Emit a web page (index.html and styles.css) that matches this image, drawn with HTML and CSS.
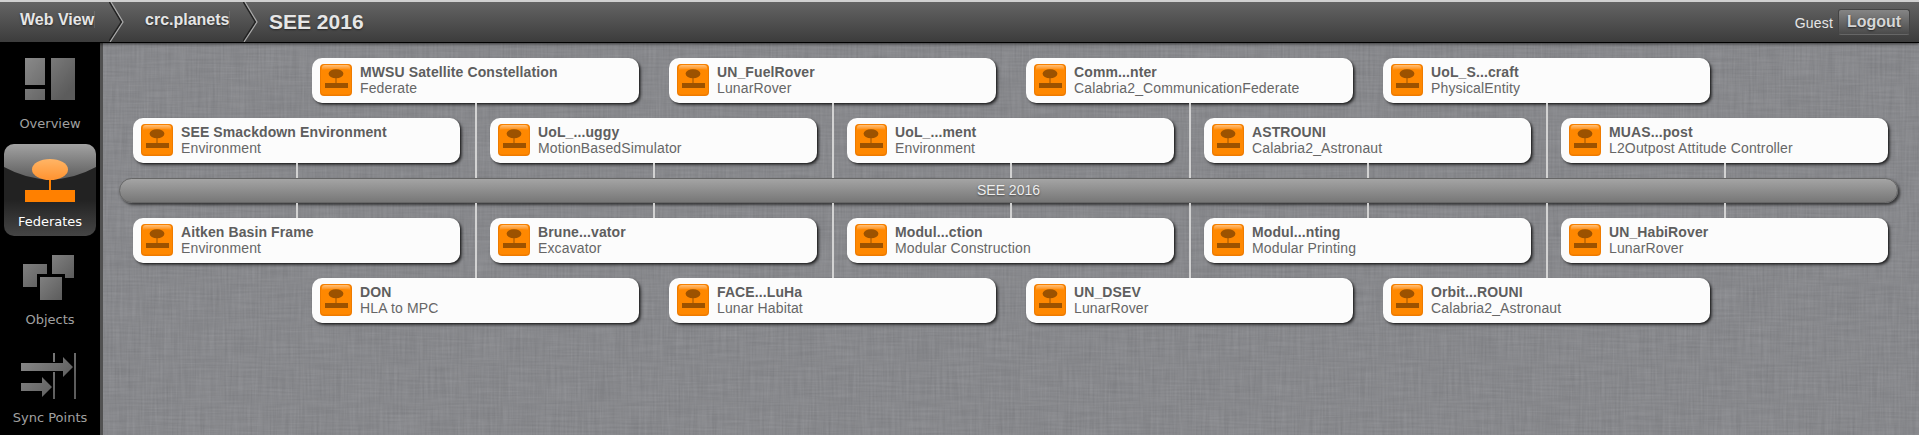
FILE: index.html
```html
<!DOCTYPE html>
<html lang="en">
<head>
<meta charset="utf-8">
<title>SEE 2016</title>
<link rel="stylesheet" href="styles.css">
</head>
<body>
<svg class="defs" width="0" height="0" aria-hidden="true">
  <defs>
    <linearGradient id="steel" x1="0" y1="0" x2="1" y2="1"><stop offset="0" stop-color="#808080"/><stop offset="1" stop-color="#5c5c5c"/></linearGradient>
    <linearGradient id="steelAll" gradientUnits="userSpaceOnUse" x1="15" y1="0" x2="65" y2="45"><stop offset="0" stop-color="#949494"/><stop offset="1" stop-color="#5c5c5c"/></linearGradient>
    <linearGradient id="amber" x1="0" y1="0" x2="0" y2="1"><stop offset="0" stop-color="#ffb566"/><stop offset="1" stop-color="#ff9330"/></linearGradient>
    <linearGradient id="gloss" x1="0" y1="0" x2="0" y2="1"><stop offset="0" stop-color="#a2a2a2"/><stop offset="1" stop-color="#5c5c5c"/></linearGradient>
    <linearGradient id="shine" x1="0" y1="0" x2="0" y2="1"><stop offset="0" stop-color="#ffc07a"/><stop offset="1" stop-color="#ff8a0a"/></linearGradient>
    <symbol id="federate" viewBox="0 0 32 32">
      <rect width="32" height="32" rx="4" fill="#ee7b00"/>
      <rect x="1" y="0.5" width="30" height="30" rx="3.5" fill="#ff8800"/>
      <path d="M2 6V3.5Q2 1 5 1H27Q30 1 30 3.5V6Q16 4 2 6Z" fill="url(#shine)"/>
      <ellipse cx="16" cy="9.8" rx="7.4" ry="4.5" fill="#9c5200"/>
      <path d="M15.5 14h1v5h-1zM5 19h23v5H5z" fill="#9c5200"/>
    </symbol>
  </defs>
</svg>

<header class="topbar">
  <nav class="crumbs">
    <a class="crumb first"><span>Web View</span></a>
    <svg class="chevron" width="16" height="40" viewBox="0 0 16 40"><path d="M2 0L14 20L1 40" fill="none" stroke="#222" stroke-width="1.5" transform="translate(-1.6 0)"/><path d="M2 0L14 20L1 40" fill="none" stroke="#aaa" stroke-width="1.2"/></svg>
    <a class="crumb second"><span>crc.planets</span></a>
    <svg class="chevron" width="16" height="40" viewBox="0 0 16 40"><path d="M2 0L14 20L1 40" fill="none" stroke="#222" stroke-width="1.5" transform="translate(-1.6 0)"/><path d="M2 0L14 20L1 40" fill="none" stroke="#aaa" stroke-width="1.2"/></svg>
    <h1 class="title">SEE 2016</h1>
  </nav>
  <div class="account"><span>Guest</span><button class="logout">Logout</button></div>
</header>

<div class="shell">
  <aside class="side">
    <a class="tab">
      <svg width="92" height="60" viewBox="0 0 92 60"><path d="M21 12h20v27H21zM21 43h20v11H21zM47 12h24v42H47z" fill="url(#steelAll)"/></svg>
      <span>Overview</span>
    </a>
    <a class="tab active">
      <svg width="92" height="60" viewBox="0 0 92 60"><path d="M0 0H92V23Q46 48 0 23Z" fill="url(#gloss)"/><path d="M45 34h2v14h-2z" fill="#ff8000"/><ellipse cx="46" cy="25.5" rx="18" ry="10.5" fill="url(#amber)"/><path d="M21 46h50v12H21z" fill="#ff8000"/></svg>
      <span>Federates</span>
    </a>
    <a class="tab">
      <svg width="92" height="60" viewBox="0 0 92 60"><path d="M48 13h22v23H48z" fill="url(#steel)"/><path d="M19 22h24v23H19z" fill="url(#steel)"/><path d="M33 32h28v28H33z" fill="#000"/><path d="M36 35h22v23H36z" fill="url(#steel)"/></svg>
      <span>Objects</span>
    </a>
    <a class="tab">
      <svg width="92" height="60" viewBox="0 0 92 60"><path d="M49 13h2v9h-2zM49 32h2v27h-2zM70 13h2v46h-2zM17 23h42v-6l10 10-10 10v-6H17zM17 43h21v-6l10 10-10 10v-6H17z" fill="url(#steelAll)"/></svg>
      <span>Sync Points</span>
    </a>
  </aside>

  <main class="canvas">
    <svg class="linen" width="100%" height="100%" aria-hidden="true">
      <filter id="weft" x="0" y="0" width="100%" height="100%" color-interpolation-filters="sRGB"><feTurbulence type="fractalNoise" baseFrequency="0.025 0.5" numOctaves="2" seed="3"/><feColorMatrix values="1 0 0 0 0.04  1 0 0 0 0.04  1 0 0 0 0.05  0 0 0 0 1"/></filter>
      <filter id="warp" x="0" y="0" width="100%" height="100%" color-interpolation-filters="sRGB"><feTurbulence type="fractalNoise" baseFrequency="0.5 0.025" numOctaves="2" seed="8"/><feColorMatrix values="1 0 0 0 0.04  1 0 0 0 0.04  1 0 0 0 0.05  0 0 0 0 1"/></filter>
      <rect width="100%" height="100%" filter="url(#weft)" opacity="0.06"/>
      <rect width="100%" height="100%" filter="url(#warp)" opacity="0.06"/>
    </svg>
    <div class="board">
      <section class="row above far">
        <article class="card"><svg class="icon"><use href="#federate"/></svg><div class="text"><b>MWSU Satellite Constellation</b><span>Federate</span></div></article>
        <article class="card"><svg class="icon"><use href="#federate"/></svg><div class="text"><b>UN_FuelRover</b><span>LunarRover</span></div></article>
        <article class="card"><svg class="icon"><use href="#federate"/></svg><div class="text"><b>Comm...nter</b><span>Calabria2_CommunicationFederate</span></div></article>
        <article class="card"><svg class="icon"><use href="#federate"/></svg><div class="text"><b>UoL_S...craft</b><span>PhysicalEntity</span></div></article>
      </section>
      <section class="row above">
        <article class="card"><svg class="icon"><use href="#federate"/></svg><div class="text"><b>SEE Smackdown Environment</b><span>Environment</span></div></article>
        <article class="card"><svg class="icon"><use href="#federate"/></svg><div class="text"><b>UoL_...uggy</b><span>MotionBasedSimulator</span></div></article>
        <article class="card"><svg class="icon"><use href="#federate"/></svg><div class="text"><b>UoL_...ment</b><span>Environment</span></div></article>
        <article class="card"><svg class="icon"><use href="#federate"/></svg><div class="text"><b>ASTROUNI</b><span>Calabria2_Astronaut</span></div></article>
        <article class="card"><svg class="icon"><use href="#federate"/></svg><div class="text"><b>MUAS...post</b><span>L2Outpost Attitude Controller</span></div></article>
      </section>
      <div class="bus">SEE 2016</div>
      <section class="row below">
        <article class="card"><svg class="icon"><use href="#federate"/></svg><div class="text"><b>Aitken Basin Frame</b><span>Environment</span></div></article>
        <article class="card"><svg class="icon"><use href="#federate"/></svg><div class="text"><b>Brune...vator</b><span>Excavator</span></div></article>
        <article class="card"><svg class="icon"><use href="#federate"/></svg><div class="text"><b>Modul...ction</b><span>Modular Construction</span></div></article>
        <article class="card"><svg class="icon"><use href="#federate"/></svg><div class="text"><b>Modul...nting</b><span>Modular Printing</span></div></article>
        <article class="card"><svg class="icon"><use href="#federate"/></svg><div class="text"><b>UN_HabiRover</b><span>LunarRover</span></div></article>
      </section>
      <section class="row below far">
        <article class="card"><svg class="icon"><use href="#federate"/></svg><div class="text"><b>DON</b><span>HLA to MPC</span></div></article>
        <article class="card"><svg class="icon"><use href="#federate"/></svg><div class="text"><b>FACE...LuHa</b><span>Lunar Habitat</span></div></article>
        <article class="card"><svg class="icon"><use href="#federate"/></svg><div class="text"><b>UN_DSEV</b><span>LunarRover</span></div></article>
        <article class="card"><svg class="icon"><use href="#federate"/></svg><div class="text"><b>Orbit...ROUNI</b><span>Calabria2_Astronaut</span></div></article>
      </section>
    </div>
  </main>
</div>
</body>
</html>
```
FILE: styles.css
```css
* { box-sizing: border-box; }
html, body { height: 100%; margin: 0; }
body {
  display: flex;
  flex-direction: column;
  overflow: hidden;
  background: #000;
  font-family: "Liberation Sans", Arial, sans-serif;
}
.defs { position: absolute; }

/* Top bar */
.topbar {
  position: relative;
  z-index: 2;
  flex: 0 0 43px;
  display: flex;
  justify-content: space-between;
  border-top: 2px solid #d0d0d0;
  border-bottom: 1px solid #000;
  background: linear-gradient(#646464, #3c3c3c);
  box-shadow: 0 1px 3px rgba(0, 0, 0, .6);
  color: #e6e6e6;
}
.crumbs { display: flex; }
.crumb {
  height: 37px;
  line-height: 36px;
  font-size: 16px;
  font-weight: bold;
  text-shadow: 0 1px 2px rgba(0, 0, 0, .5);
}
.crumb span { border-right: 1px solid rgba(255, 255, 255, .1); }
.first { width: 109px; padding-left: 20px; }
.second { width: 118px; padding-left: 20px; }
.chevron { flex: none; }
.title {
  margin: 0 0 0 10px;
  line-height: 40px;
  font-size: 21px;
  text-shadow: 0 1px 2px rgba(0, 0, 0, .5);
}
.account {
  display: flex;
  align-items: center;
  gap: 5px;
  padding: 0 9px 0 0;
  font-size: 14px;
  letter-spacing: .2px;
}
.account span { padding-top: 1px; }
.logout {
  width: 72px;
  height: 26px;
  padding: 0;
  border: 1px solid #444;
  border-bottom-color: #666;
  border-radius: 3px;
  background: linear-gradient(#858585, #4a4a4a);
  color: #d6d6d6;
  font: bold 16px "Liberation Sans", Arial, sans-serif;
  text-shadow: 0 1px 2px rgba(0, 0, 0, .6);
}

/* Sidebar */
.shell { flex: 1; min-height: 0; display: flex; }
.side {
  flex: 0 0 103px;
  display: flex;
  flex-direction: column;
  gap: 6px;
  padding: 3px 4px 0;
  border-right: 3px solid #515151;
  background: #000;
}
.tab {
  flex: 0 0 92px;
  width: 92px;
  display: flex;
  flex-direction: column;
  overflow: hidden;
  border-radius: 10px;
  color: #a0a0a0;
  font: 13px "DejaVu Sans", Verdana, sans-serif;
  text-align: center;
}
.tab svg { flex: none; }
.tab span { line-height: 35px; white-space: nowrap; }
.active { background: linear-gradient(#222 60%, #454545); color: #fff; }

/* Federation board */
.canvas {
  position: relative;
  flex: 1;
  padding: 15px 21px 0 16px;
  background: #88898d;
}
.linen { position: absolute; inset: 0; }
.board { position: relative; display: flex; flex-direction: column; gap: 15px; }
.row { display: flex; gap: 30px; padding-left: 14px; }
.far { padding-left: 193px; }
.card {
  position: relative;
  flex: 0 0 327px;
  height: 45px;
  display: flex;
  gap: 8px;
  padding: 6px 8px;
  border-radius: 10px;
  background: #fcfcfc;
  box-shadow: 1px 1px 1px rgba(0, 0, 0, .3), 2px 2px 3px rgba(0, 0, 0, .6);
}
.card::after {
  content: "";
  position: absolute;
  left: 163px;
  width: 2px;
  height: 15px;
  background: #d2d2d2;
}
.above .card::after { top: 100%; }
.below .card::after { bottom: 100%; }
.far .card::after { height: 75px; }
.icon { width: 32px; height: 32px; flex: none; }
.text {
  display: flex;
  flex-direction: column;
  color: #666;
  font-size: 14px;
  line-height: 16px;
  letter-spacing: .14px;
  white-space: nowrap;
}
.text b { color: #5e5e5e; letter-spacing: .11px; }
.bus {
  height: 25px;
  border: 1px solid #666;
  border-radius: 13px;
  background: linear-gradient(#a4a4a4, #777);
  box-shadow: 2px 2px 3px rgba(0, 0, 0, .6);
  color: #eee;
  font-size: 14px;
  line-height: 23px;
  text-align: center;
  text-shadow: 0 1px 2px rgba(0, 0, 0, .5);
}
```
